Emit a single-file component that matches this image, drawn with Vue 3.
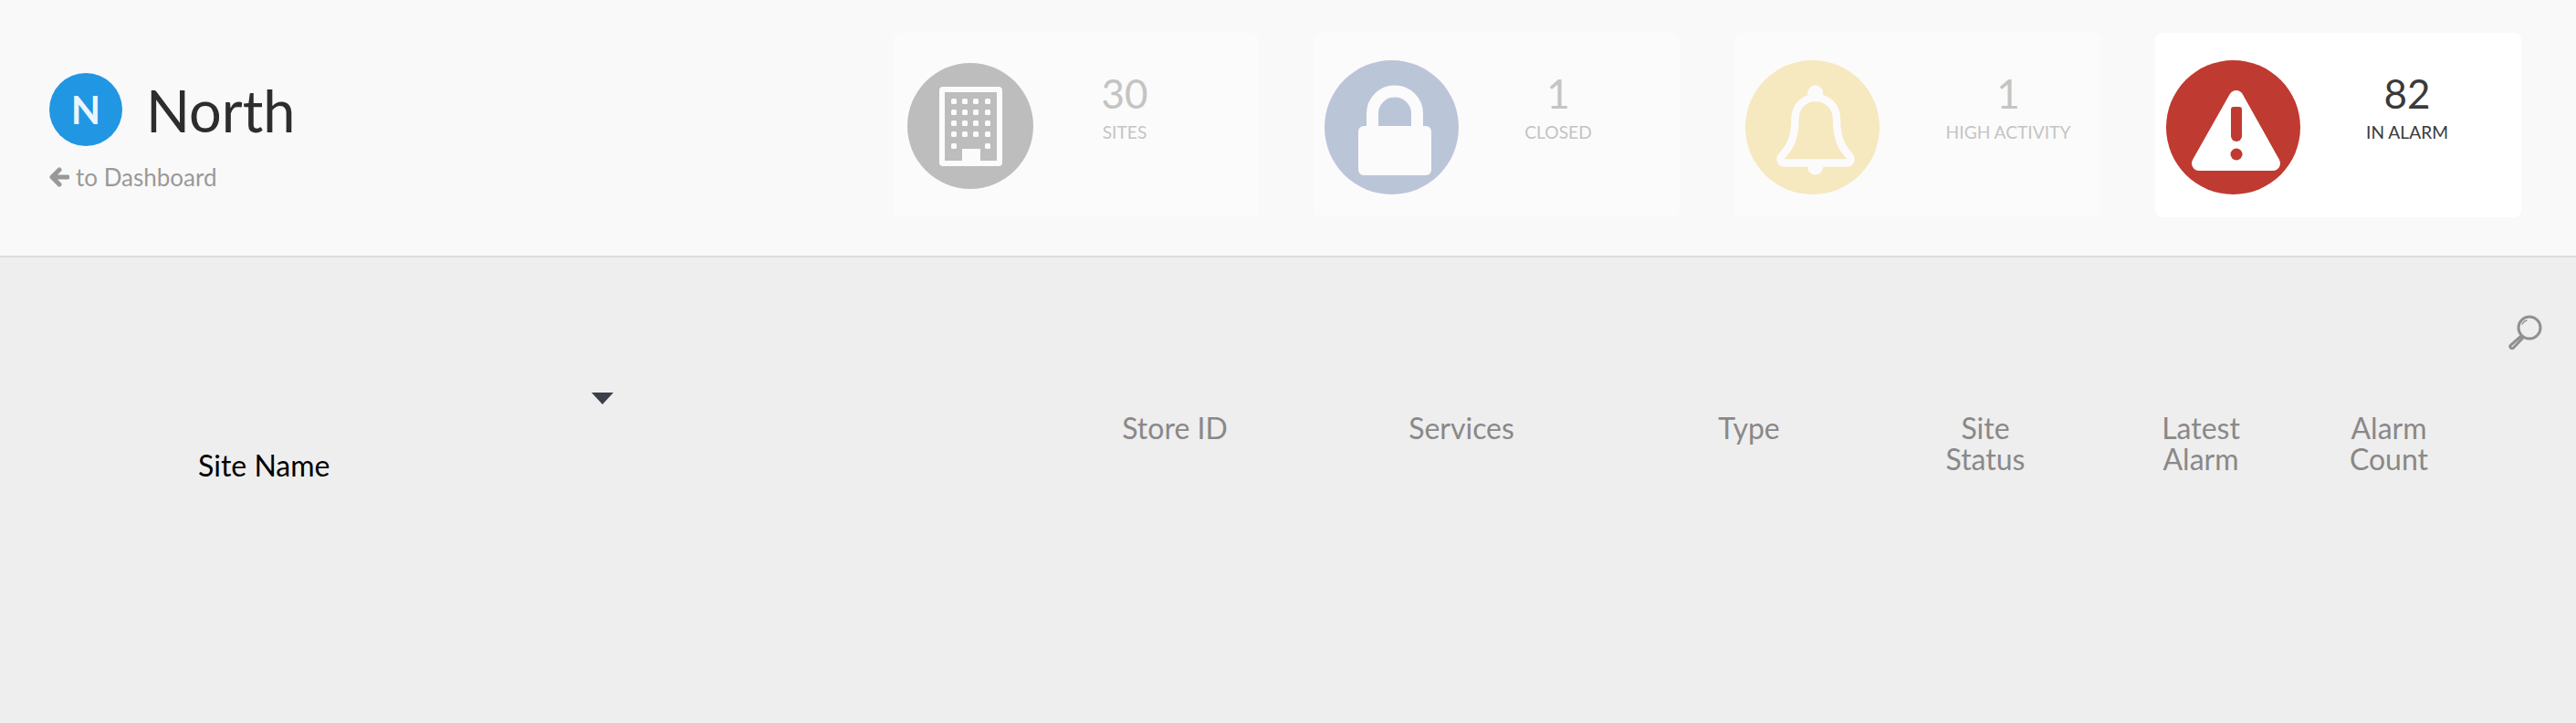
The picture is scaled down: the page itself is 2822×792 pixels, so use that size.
<script setup>
const columns = [
  { key: "store", lines: ["Store ID"] },
  { key: "services", lines: ["Services"] },
  { key: "type", lines: ["Type"] },
  { key: "status", lines: ["Site", "Status"] },
  { key: "latest", lines: ["Latest", "Alarm"] },
  { key: "count", lines: ["Alarm", "Count"] },
];
</script>

<template>
  <div class="page">
    <header class="top">
      <div class="brand">
        <div class="brand-row">
          <span class="avatar">N</span>
          <h1>North</h1>
        </div>
        <a class="back">
          <svg width="22" height="22" viewBox="0 0 22 22">
            <path d="M11 3 3 11l8 8M4 11h16" fill="none" stroke="#999" stroke-width="5" stroke-linecap="round" stroke-linejoin="round" />
          </svg>
          to Dashboard
        </a>
      </div>

      <div class="cards">
        <div class="card card-sites">
          <svg class="icon" width="138" height="138" viewBox="0 0 138 138">
            <circle cx="69" cy="69" r="69" fill="#bcbdbc" />
            <rect x="38" y="29" width="63" height="81" rx="1" fill="none" stroke="#fbfbfb" stroke-width="6" />
            <rect x="60" y="94" width="20" height="15" fill="#fbfbfb" />
            <g fill="#fbfbfb">
              <rect x="48" y="39" width="6" height="6" rx="1.5" />
              <rect x="60" y="39" width="6" height="6" rx="1.5" />
              <rect x="72" y="39" width="6" height="6" rx="1.5" />
              <rect x="85" y="39" width="6" height="6" rx="1.5" />
              <rect x="48" y="51" width="6" height="6" rx="1.5" />
              <rect x="60" y="51" width="6" height="6" rx="1.5" />
              <rect x="72" y="51" width="6" height="6" rx="1.5" />
              <rect x="85" y="51" width="6" height="6" rx="1.5" />
              <rect x="48" y="63" width="6" height="6" rx="1.5" />
              <rect x="60" y="63" width="6" height="6" rx="1.5" />
              <rect x="72" y="63" width="6" height="6" rx="1.5" />
              <rect x="85" y="63" width="6" height="6" rx="1.5" />
              <rect x="48" y="75" width="6" height="6" rx="1.5" />
              <rect x="60" y="75" width="6" height="6" rx="1.5" />
              <rect x="72" y="75" width="6" height="6" rx="1.5" />
              <rect x="85" y="75" width="6" height="6" rx="1.5" />
              <rect x="48" y="88" width="6" height="6" rx="1.5" />
              <rect x="85" y="88" width="6" height="6" rx="1.5" />
            </g>
          </svg>
          <div class="stat">
            <div class="num">30</div>
            <div class="label">SITES</div>
          </div>
        </div>

        <div class="card card-closed">
          <svg class="icon" width="147" height="147" viewBox="0 0 147 147">
            <circle cx="73.5" cy="73.5" r="73.5" fill="#bbc5d8" />
            <path d="M52.5 76V58.5a24.5 24.5 0 0 1 49 0V76" fill="none" stroke="#fbfbfb" stroke-width="13" />
            <rect x="37" y="72" width="80" height="54" rx="6" fill="#fbfbfb" />
          </svg>
          <div class="stat">
            <div class="num">1</div>
            <div class="label">CLOSED</div>
          </div>
        </div>

        <div class="card card-activity">
          <svg class="icon" width="147" height="147" viewBox="0 0 147 147">
            <circle cx="73.5" cy="73.5" r="73.5" fill="#f6e8bf" />
            <circle cx="76.7" cy="36" r="8.5" fill="#fbfbfb" />
            <path d="M68 116h17.4a8.7 9.5 0 0 1-17.4 0Z" fill="#fbfbfb" />
            <path d="M43 112.5H111C115.5 112.5 117 108 113.5 104 105 95 100 85 100 64 100 51 90 41 77 41 64 41 54.5 51 54.5 64 54.5 85 49 95 40.5 104 37 108 38.5 112.5 43 112.5Z" fill="#f6e8bf" stroke="#fbfbfb" stroke-width="8.5" />
          </svg>
          <div class="stat">
            <div class="num">1</div>
            <div class="label">HIGH ACTIVITY</div>
          </div>
        </div>

        <div class="card card-alarm">
          <svg class="icon" width="147" height="147" viewBox="0 0 147 147">
            <circle cx="73.5" cy="73.5" r="73.5" fill="#bf3a30" />
            <path d="M76.7 41 117 113H36Z" fill="#fff" stroke="#fff" stroke-width="16" stroke-linejoin="round" />
            <path d="M71 54a3 3 0 0 1 3-3h6a3 3 0 0 1 3 3v29a6 6 0 0 1-12 0Z" fill="#bf3a30" />
            <circle cx="77" cy="103" r="6.5" fill="#bf3a30" />
          </svg>
          <div class="stat">
            <div class="num">82</div>
            <div class="label">IN ALARM</div>
          </div>
        </div>
      </div>
    </header>

    <main class="content">
      <div class="tools">
        <svg width="38" height="38" viewBox="0 0 38 38" fill="none" stroke="#909090">
          <circle cx="24" cy="14" r="12" stroke-width="3" />
          <path d="M16 10c1-2 3-3.500 5-4" stroke-width="1.500" stroke-linecap="round" />
          <path d="M15 23 3.500 33a2 2 0 0 0 3 3L17 25" stroke-width="3" stroke-linecap="round" />
        </svg>
      </div>

      <div class="thead">
        <div class="th-name">
          <span class="caret"></span>
          <span class="name">Site Name</span>
        </div>
        <div v-for="col in columns" :key="col.key" class="th">
          <div v-for="line in col.lines" :key="line">{{ line }}</div>
        </div>
      </div>
    </main>
  </div>
</template>

<style>
html,
body {
  margin: 0;
  background: #eeeeee;
}
</style>

<style scoped>
.page {
  font-family: Lato, "Open Sans", sans-serif;
  min-height: 792px;
  background: #eeeeee;
}
.top {
  box-sizing: border-box;
  height: 282px;
  display: flex;
  justify-content: space-between;
  padding: 36px 60px 0 54px;
  background: #f9f9f9;
  border-bottom: 2px solid #dcdcdc;
}
.brand {
  padding-top: 44px;
}
.brand-row {
  display: flex;
  align-items: center;
  gap: 26px;
}
.avatar {
  width: 80px;
  height: 80px;
  border-radius: 50%;
  background: #2196e3;
  color: #eaf5fd;
  font-size: 42px;
  font-weight: 700;
  line-height: 80px;
  text-align: center;
}
h1 {
  margin: 0;
  font-size: 63px;
  font-weight: 400;
  color: #2d2d2d;
}
.back {
  display: flex;
  align-items: center;
  gap: 7px;
  margin-top: 20px;
  font-size: 26px;
  line-height: 28px;
  color: #999;
}
.cards {
  display: flex;
  gap: 60px;
  height: 202px;
}
.card {
  box-sizing: border-box;
  width: 401px;
  border-radius: 8px;
  background: #fbfbfb;
  display: flex;
  align-items: center;
  color: #c4c4c4;
}
.icon {
  flex: none;
  margin-top: 5px;
}
.stat {
  flex: none;
  align-self: flex-start;
  width: 200px;
  margin-top: 44px;
  text-align: center;
}
.num {
  font-size: 44px;
  line-height: 44px;
}
.label {
  margin-top: 9px;
  font-size: 19.2px;
  line-height: 24px;
}
.card-sites .icon {
  margin-top: 2px;
  margin-left: 16px;
}
.card-sites .stat {
  margin-left: 0;
}
.card-closed .icon {
  margin-left: 12px;
}
.card-closed .stat {
  margin-left: 9px;
}
.card-activity .icon {
  margin-left: 12px;
}
.card-activity .stat {
  margin-left: 41px;
}
.card-alarm {
  background: #fff;
  color: #3a3a3a;
}
.card-alarm .icon {
  margin-left: 12px;
}
.card-alarm .stat {
  margin-left: 17px;
}
.tools {
  display: flex;
  justify-content: flex-end;
  padding: 63px 37px 0 0;
  height: 38px;
}
.thead {
  display: grid;
  grid-template-columns: 1130px 314px 314px 316px 202px 270px 142px;
  margin-top: 47px;
}
.th-name {
  display: flex;
  flex-direction: column;
  align-items: flex-start;
  padding-left: 217px;
}
.caret {
  width: 0;
  height: 0;
  margin-left: 431px;
  border-left: 12px solid transparent;
  border-right: 12px solid transparent;
  border-top: 13px solid #3a3f4b;
}
.name {
  margin-top: 50px;
  font-size: 32px;
  line-height: 34px;
  color: #000;
}
.th {
  padding-top: 22px;
  font-size: 32px;
  line-height: 34px;
  color: #8a8888;
  text-align: center;
}
</style>
